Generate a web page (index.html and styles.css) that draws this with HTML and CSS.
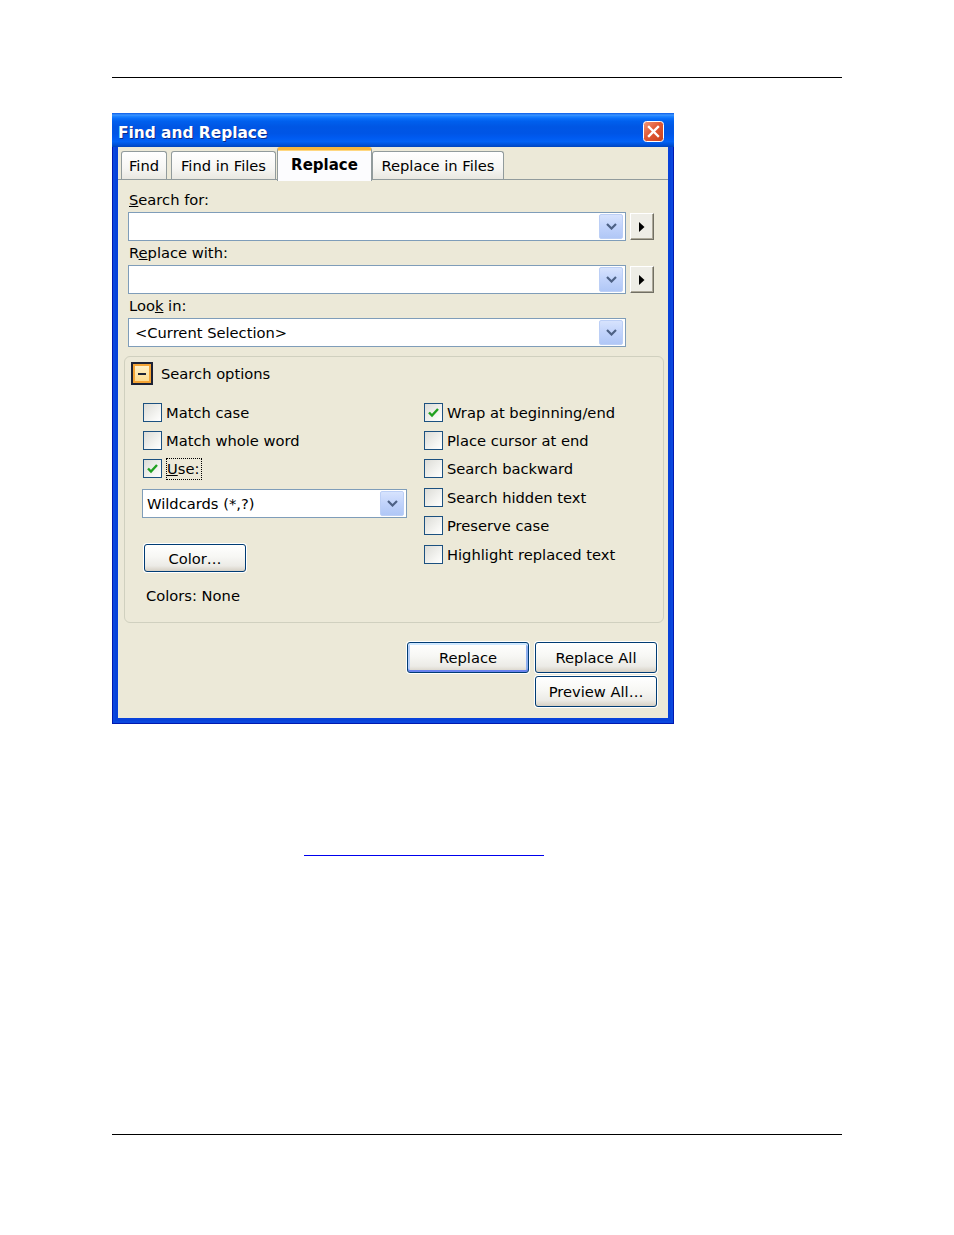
FILE: index.html
```html
<!DOCTYPE html>
<html>
<head>
<meta charset="utf-8">
<title>Find and Replace</title>
<link rel="stylesheet" href="styles.css">
</head>
<body>
<div class="page">
  <div class="rule"></div>

  <div class="dialog">
    <div class="titlebar">
      <span class="title">Find and Replace</span>
      <span class="close">
        <svg width="21" height="21" viewBox="0 0 21 21">
          <defs>
            <linearGradient id="rg" x1="0" y1="0" x2="1" y2="1">
              <stop offset="0" stop-color="#F09A7E"/>
              <stop offset="0.45" stop-color="#E25A36"/>
              <stop offset="1" stop-color="#C8401C"/>
            </linearGradient>
          </defs>
          <rect x="0.5" y="0.5" width="20" height="20" rx="3" fill="url(#rg)" stroke="#FFFFFF"/>
          <path d="M6 6 L15 15 M15 6 L6 15" stroke="#FFFFFF" stroke-width="2.4" stroke-linecap="square"/>
        </svg>
      </span>
    </div>

    <div class="client">
      <div class="tabs">
        <div class="tab t-find">Find</div>
        <div class="tab t-fif">Find in Files</div>
        <div class="tab active t-rep">Replace</div>
        <div class="tab t-rif">Replace in Files</div>
      </div>

      <div class="panel">
        <div class="label"><u>S</u>earch for:</div>
        <div class="field-row">
          <div class="combo wide">
            <span class="combo-text"></span>
            <span class="ddbtn"><svg width="11" height="7" viewBox="0 0 11 7"><polyline points="1,1 5.5,5.5 10,1" fill="none" stroke="#4D6185" stroke-width="2.2"/></svg></span>
          </div>
          <div class="arrowbtn"><svg width="6" height="10" viewBox="0 0 6 10"><polygon points="0,0 5.5,5 0,10" fill="#000"/></svg></div>
        </div>

        <div class="label">R<u>e</u>place with:</div>
        <div class="field-row">
          <div class="combo wide">
            <span class="combo-text"></span>
            <span class="ddbtn"><svg width="11" height="7" viewBox="0 0 11 7"><polyline points="1,1 5.5,5.5 10,1" fill="none" stroke="#4D6185" stroke-width="2.2"/></svg></span>
          </div>
          <div class="arrowbtn"><svg width="6" height="10" viewBox="0 0 6 10"><polygon points="0,0 5.5,5 0,10" fill="#000"/></svg></div>
        </div>

        <div class="label">Loo<u>k</u> in:</div>
        <div class="field-row">
          <div class="combo wide">
            <span class="combo-text">&lt;Current Selection&gt;</span>
            <span class="ddbtn"><svg width="11" height="7" viewBox="0 0 11 7"><polyline points="1,1 5.5,5.5 10,1" fill="none" stroke="#4D6185" stroke-width="2.2"/></svg></span>
          </div>
        </div>

        <div class="group">
          <div class="group-head">
            <span class="collapse"></span>
            <span>Search options</span>
          </div>
          <div class="group-body">
            <div class="col col-left">
              <div class="opt"><span class="cb"></span><span>Match case</span></div>
              <div class="opt"><span class="cb"></span><span>Match whole word</span></div>
              <div class="opt"><span class="cb"><svg width="17" height="17" viewBox="0 0 17 17"><path d="M4 8.5 L7 11.5 L13 5" fill="none" stroke="#21A121" stroke-width="2.4"/></svg></span><span class="focus"><u>U</u>se:</span></div>
              <div class="combo wild">
                <span class="combo-text">Wildcards (*,?)</span>
                <span class="ddbtn"><svg width="11" height="7" viewBox="0 0 11 7"><polyline points="1,1 5.5,5.5 10,1" fill="none" stroke="#4D6185" stroke-width="2.2"/></svg></span>
              </div>
              <div class="btn btn-color">Color…</div>
              <div class="colors-text">Colors: None</div>
            </div>
            <div class="col col-right">
              <div class="opt"><span class="cb"><svg width="17" height="17" viewBox="0 0 17 17"><path d="M4 8.5 L7 11.5 L13 5" fill="none" stroke="#21A121" stroke-width="2.4"/></svg></span><span>Wrap at beginning/end</span></div>
              <div class="opt"><span class="cb"></span><span>Place cursor at end</span></div>
              <div class="opt"><span class="cb"></span><span>Search backward</span></div>
              <div class="opt"><span class="cb"></span><span>Search hidden text</span></div>
              <div class="opt"><span class="cb"></span><span>Preserve case</span></div>
              <div class="opt"><span class="cb"></span><span>Highlight replaced text</span></div>
            </div>
          </div>
        </div>

        <div class="buttons">
          <div class="btn btn-default b-replace">Replace</div>
          <div class="btn b-all">Replace All</div>
          <div class="btn b-preview">Preview All…</div>
        </div>
      </div>
    </div>
  </div>

  <div class="link-line"></div>
  <div class="rule rule-bottom"></div>
</div>
</body>
</html>
```

FILE: styles.css
```css
* {
  box-sizing: border-box;
}

html, body {
  margin: 0;
  padding: 0;
  background: #FFFFFF;
}

body {
  font-family: "DejaVu Sans", "Liberation Sans", sans-serif;
  font-size: 14.7px;
  color: #000000;
}

.page {
  width: 954px;
  height: 1235px;
  padding: 77px 0 0 112px;
}

.rule {
  width: 730px;
  height: 1px;
  background: #000000;
}

.rule-bottom {
  margin-top: 278px;
}

.link-line {
  margin: 131px 0 0 192px;
  width: 240px;
  height: 1px;
  background: #0000EE;
}

/* ---------- dialog frame ---------- */
.dialog {
  margin-top: 35px;
  width: 562px;
  height: 611px;
  display: flex;
  flex-direction: column;
  padding: 0 6px 6px 6px;
  background: #0842DA;
  box-shadow: inset 1px 0 0 #0019B0, inset -1px 0 0 #0019B0, inset 0 -1px 0 #0019B0,
              inset 3px 0 0 #0A47DF, inset -3px 0 0 #0A47DF, inset 0 -3px 0 #0A47DF;
}

.titlebar {
  margin: 0 -6px;
  height: 34px;
  display: flex;
  align-items: center;
  justify-content: space-between;
  padding: 3px 10px 0 6px;
  background: linear-gradient(#0A5BE8 0%, #3D95FF 6%, #1E83FF 10%, #0A6FFA 16%, #0060EE 24%, #0056E4 40%, #0055E6 60%, #005AF0 72%, #0262F5 84%, #0054DD 92%, #0045BD 100%);
}

.title {
  color: #FFFFFF;
  font-weight: bold;
  font-size: 15.4px;
  padding-top: 3px;
  text-shadow: 1px 1px 0 #0A2A8A;
}

.close {
  width: 21px;
  height: 21px;
  display: flex;
}

.client {
  flex: 1;
  display: flex;
  flex-direction: column;
  background: #ECE9D8;
}

/* ---------- tabs ---------- */
.tabs {
  height: 32px;
  padding-left: 3px;
  display: flex;
  align-items: flex-end;
}

.tab {
  position: relative;
  height: 28px;
  display: flex;
  align-items: center;
  justify-content: center;
  border: 1px solid #919B9C;
  border-bottom: 0;
  border-radius: 3px 3px 0 0;
  background: linear-gradient(#FFFFFF, #F6F6F3 60%, #E9E8E1);
  white-space: nowrap;
}

.t-find { width: 46px; margin-right: 4px; }
.t-fif  { width: 105px; }
.t-rep  { width: 95px; margin-left: 1px; }
.t-rif  { width: 132px; margin-left: 0; }

.tab.active {
  z-index: 1;
  height: 34px;
  margin-bottom: -2px;
  padding-bottom: 2px;
  border-top: 3px solid #F7B63C;
  box-shadow: inset 0 1px 0 #FFD780;
  background: #FCFCFE;
  font-weight: bold;
  font-size: 15px;
}

/* ---------- panel ---------- */
.panel {
  flex: 1;
  border-top: 1px solid #919B9C;
  padding: 11px 0 0 10px;
  display: flex;
  flex-direction: column;
}

.label {
  height: 18px;
  line-height: 18px;
  padding-left: 1px;
  margin-top: 3px;
}

.panel > .label:first-child {
  margin-top: 0;
}

.field-row {
  margin-top: 3px;
  display: flex;
  align-items: center;
  gap: 4px;
}

.combo {
  height: 29px;
  display: flex;
  align-items: center;
  justify-content: space-between;
  border: 1px solid #7F9DB9;
  background: #FFFFFF;
  padding-left: 6px;
}

.combo.wide {
  width: 498px;
}

.combo-text {
  white-space: nowrap;
}

.ddbtn {
  width: 24px;
  height: 25px;
  margin-right: 2px;
  display: flex;
  align-items: center;
  justify-content: center;
  border: 1px solid #BCCFF6;
  border-radius: 2px;
  background: linear-gradient(#D7E3FD, #C1D3FB 50%, #B0C7F6);
}

.arrowbtn {
  width: 24px;
  height: 27px;
  display: flex;
  align-items: center;
  justify-content: center;
  background: #EEEDE6;
  border: 1px solid;
  border-color: #FFFFFF #716F64 #716F64 #FFFFFF;
  box-shadow: inset -1px -1px 0 #ACA899;
}

/* ---------- group box ---------- */
.group {
  margin: 9px 0 0 -4px;
  width: 540px;
  height: 267px;
  border: 1px solid #D0D0BF;
  border-radius: 6px;
  padding: 5px 0 0 6px;
}

.group-head {
  height: 23px;
  display: flex;
  align-items: center;
  gap: 8px;
}

.collapse {
  position: relative;
  width: 22px;
  height: 23px;
  border: 2px solid #1D2235;
  background: linear-gradient(#FFF3CF, #FDD889);
  box-shadow: inset 0 0 0 2px #F4A436;
}

.collapse::after {
  content: "";
  position: absolute;
  left: 5px;
  right: 5px;
  top: 8.5px;
  height: 2px;
  background: #1D2235;
}

.group-body {
  margin-top: 13px;
  padding-left: 12px;
  display: flex;
}

.col-left {
  width: 281px;
  display: flex;
  flex-direction: column;
}

.col-right {
  display: flex;
  flex-direction: column;
}

.opt {
  height: 28.4px;
  display: flex;
  align-items: center;
  gap: 4px;
  white-space: nowrap;
}

.cb {
  width: 19px;
  height: 19px;
  flex: none;
  display: flex;
  align-items: center;
  justify-content: center;
  border: 1px solid #1C5180;
  background: linear-gradient(135deg, #DCDCD7, #F6F6F3 70%, #FFFFFF);
}

.focus {
  border: 1px dotted #000000;
  line-height: 20px;
  padding: 0 2px 0 0;
}

.combo.wild {
  margin: 6px 0 0 -1px;
  width: 265px;
  padding-left: 4px;
}

/* ---------- buttons ---------- */
.btn {
  height: 31px;
  display: flex;
  align-items: center;
  justify-content: center;
  border: 1px solid #003C74;
  border-radius: 3px;
  background: linear-gradient(#FFFFFF, #F7F7F4 45%, #ECEBE6 80%, #D6D0C5);
  box-shadow: 0 0 0 1px #FFFFFF;
  white-space: nowrap;
}

.btn-color {
  margin: 26px 0 0 1px;
  width: 102px;
  height: 28px;
}

.colors-text {
  margin-top: 15px;
  padding-left: 3px;
  line-height: 18px;
}

.buttons {
  margin-top: 19px;
  padding-right: 11px;
  display: grid;
  grid-template-columns: 122px 122px;
  grid-template-rows: 31px 31px;
  column-gap: 6px;
  row-gap: 3px;
  justify-content: end;
}

.b-replace { grid-column: 1; grid-row: 1; }
.b-all     { grid-column: 2; grid-row: 1; }
.b-preview { grid-column: 2; grid-row: 2; }

.btn-default {
  box-shadow: 0 0 0 1px #FFFFFF,
              inset 0 2px 0 #CEE7FF,
              inset 0 -2px 0 #6982EE,
              inset 2px 0 0 #B8D0F8,
              inset -2px 0 0 #8DAEEE;
}
```
